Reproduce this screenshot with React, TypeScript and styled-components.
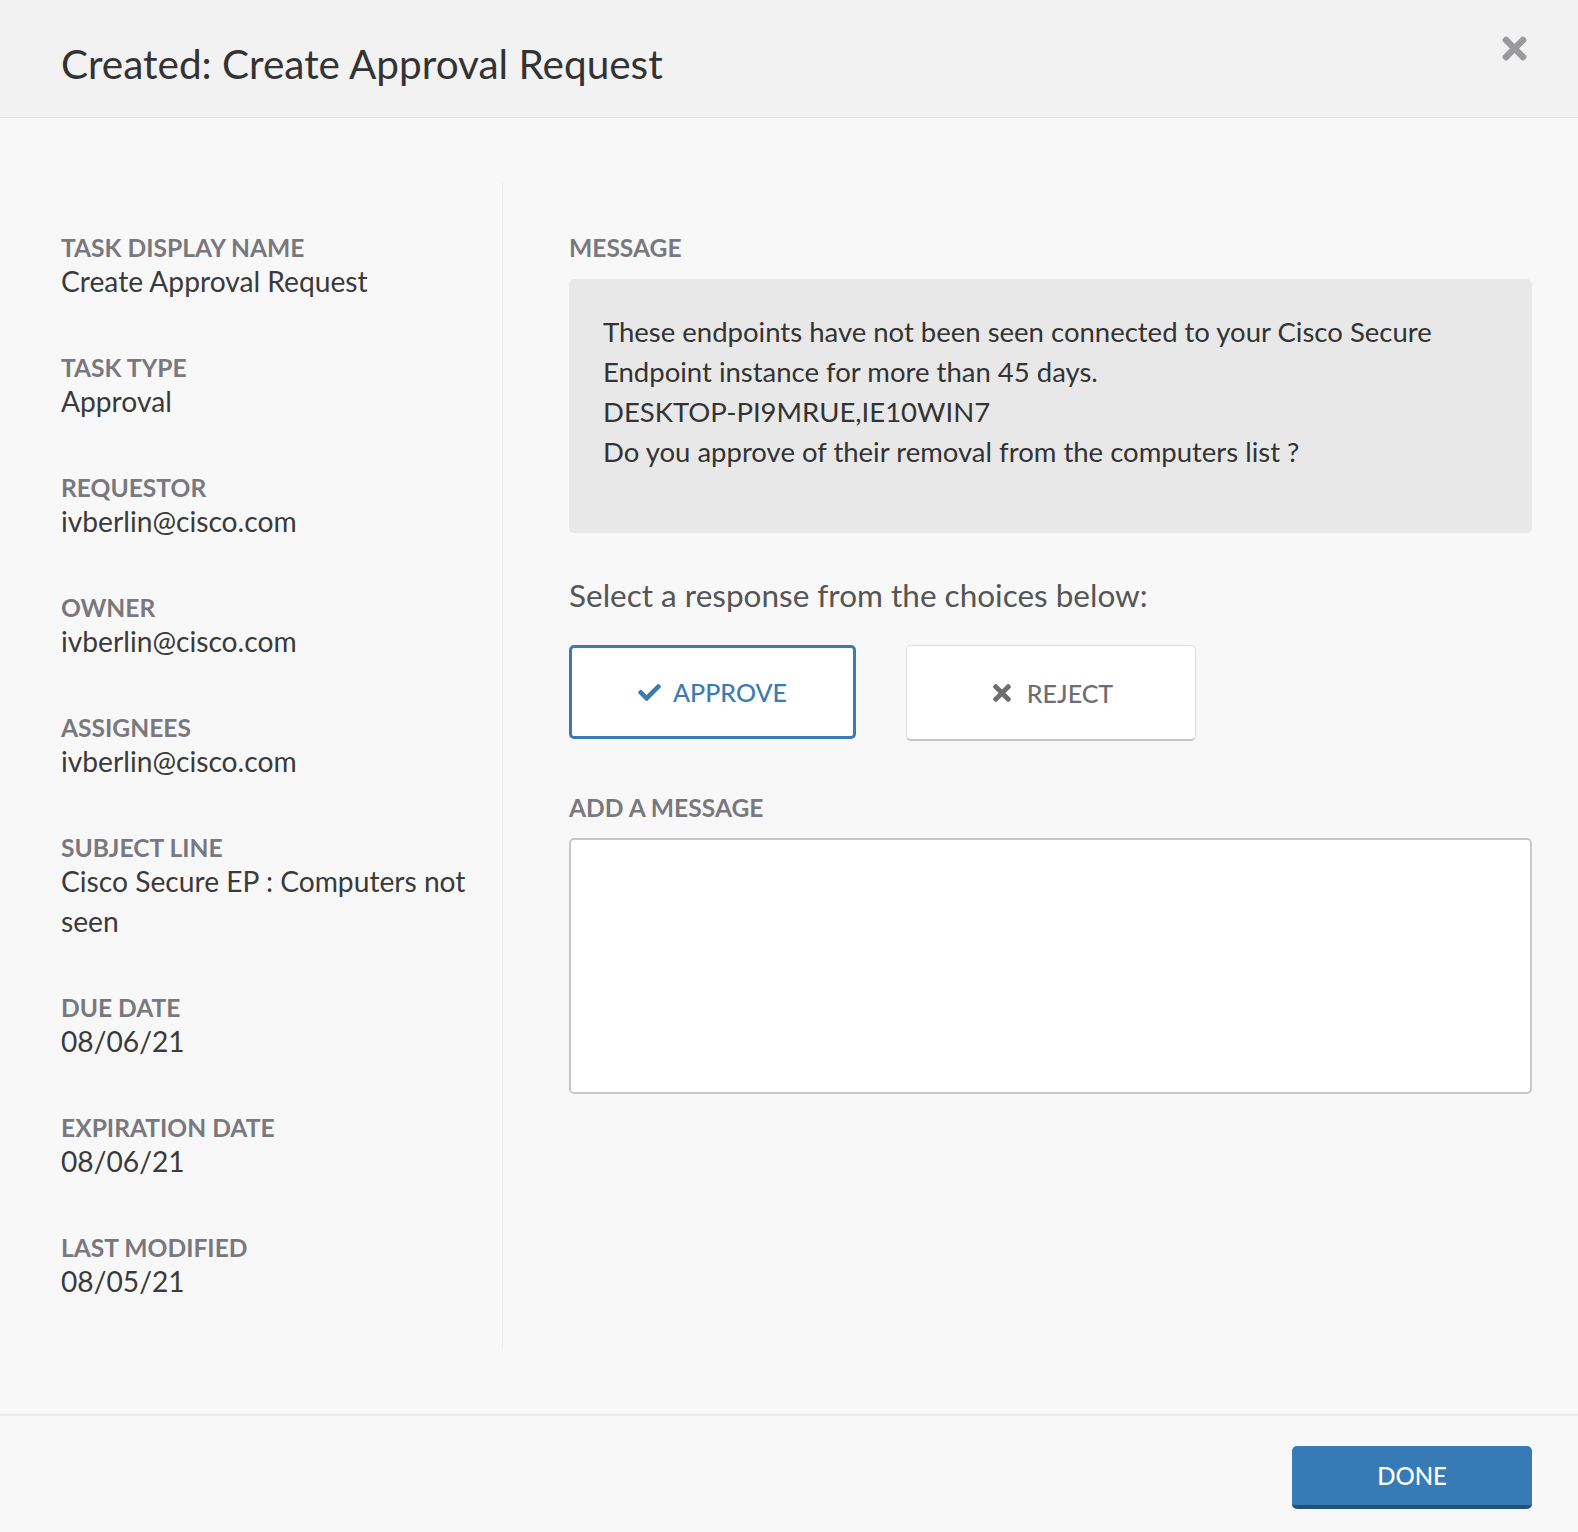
import React from "react";
import styled, { createGlobalStyle } from "styled-components";
import { FaCheck, FaTimes } from "react-icons/fa";

const GlobalStyle = createGlobalStyle`
  html, body {
    margin: 0;
    padding: 0;
    background-color: #f8f8f8;
    font-family: Lato, "Open Sans", "Liberation Sans", sans-serif;
  }
  * {
    box-sizing: border-box;
  }
`;

const Dialog = styled.div`
  display: flex;
  flex-direction: column;
  width: 1578px;
  height: 1532px;
  background-color: #f8f8f8;
`;

const Header = styled.div`
  flex-shrink: 0;
  display: flex;
  align-items: center;
  justify-content: space-between;
  height: 118px;
  padding: 10px 46px 0 61px;
  background-color: #f2f2f2;
  border-bottom: 1px solid #e6e6e6;
`;

const Title = styled.h1`
  margin: 0;
  font-size: 40.5px;
  font-weight: 400;
  color: #333333;
`;

const CloseButton = styled.button`
  display: flex;
  align-items: center;
  justify-content: center;
  border: none;
  background: transparent;
  padding: 0;
  margin-top: -30px;
  color: #9a9a9e;
  cursor: pointer;
`;

const Body = styled.div`
  flex: 1;
  min-height: 0;
  display: flex;
  padding: 64px 46px 65px 0;
`;

const Sidebar = styled.div`
  width: 503px;
  padding: 53px 0 0 61px;
  border-right: 1px solid #ececec;
`;

const Field = styled.div`
  margin-bottom: 54px;
  &:last-child {
    margin-bottom: 0;
  }
`;

const Label = styled.div`
  font-size: 24.6px;
  line-height: 26px;
  font-weight: 700;
  color: #78787e;
  text-transform: uppercase;
`;

const Value = styled.div`
  font-size: 28.2px;
  line-height: 40px;
  color: #3a3a3a;
  max-width: 410px;
`;

const Main = styled.div`
  flex: 1;
  padding: 53px 0 0 66px;
  display: flex;
  flex-direction: column;
`;

const MessageBox = styled.div`
  margin-top: 18px;
  height: 254px;
  padding: 33px 34px;
  background-color: #e8e8e8;
  border-radius: 5px;
  font-size: 27.5px;
  line-height: 40px;
  color: #333333;
`;

const Prompt = styled.div`
  margin-top: 42px;
  font-size: 31.5px;
  line-height: 40px;
  color: #555555;
`;

const Choices = styled.div`
  display: flex;
  align-items: flex-start;
  gap: 50px;
  margin-top: 30px;
`;

const Choice = styled.button<{ $selected?: boolean }>`
  display: flex;
  align-items: center;
  justify-content: center;
  gap: 12px;
  width: ${(p) => (p.$selected ? "287px" : "290px")};
  height: ${(p) => (p.$selected ? "94px" : "96px")};
  background-color: #ffffff;
  border: ${(p) => (p.$selected ? "3px solid #3a7bb6" : "1px solid #dedee0")};
  border-bottom: ${(p) => (p.$selected ? "3px solid #3a7bb6" : "2px solid #c4c4c6")};
  border-radius: 5px;
  font-family: inherit;
  font-size: 25px;
  font-weight: 500;
  color: ${(p) => (p.$selected ? "#3a7bb6" : "#6e6e72")};
  cursor: pointer;
`;

const MessageLabel = styled(Label)`
  margin-top: 54px;
`;

const MessageInput = styled.textarea`
  margin-top: 17px;
  width: 100%;
  height: 256px;
  resize: none;
  background-color: #ffffff;
  border: 2px solid #c8c8cc;
  border-radius: 5px;
  font-family: inherit;
  font-size: 24px;
  padding: 16px;
  &:focus {
    outline: none;
  }
`;

const Footer = styled.div`
  flex-shrink: 0;
  display: flex;
  justify-content: flex-end;
  align-items: flex-start;
  height: 118px;
  padding: 30px 46px 0 0;
  border-top: 2px solid #ebebeb;
`;

const DoneButton = styled.button`
  width: 240px;
  height: 63px;
  background-color: #377bb6;
  border: none;
  border-bottom: 4px solid #24517a;
  border-radius: 5px;
  color: #ffffff;
  font-family: inherit;
  font-size: 24px;
  font-weight: 500;
  cursor: pointer;
`;

const details = [
  { label: "Task Display Name", value: "Create Approval Request" },
  { label: "Task Type", value: "Approval" },
  { label: "Requestor", value: "ivberlin@cisco.com" },
  { label: "Owner", value: "ivberlin@cisco.com" },
  { label: "Assignees", value: "ivberlin@cisco.com" },
  { label: "Subject Line", value: "Cisco Secure EP : Computers not seen" },
  { label: "Due Date", value: "08/06/21" },
  { label: "Expiration Date", value: "08/06/21" },
  { label: "Last Modified", value: "08/05/21" },
];

export default function App() {
  return (
    <Dialog>
      <GlobalStyle />
      <Header>
        <Title>Created: Create Approval Request</Title>
        <CloseButton>
          <FaTimes size={35} />
        </CloseButton>
      </Header>
      <Body>
        <Sidebar>
          {details.map((d) => (
            <Field key={d.label}>
              <Label>{d.label}</Label>
              <Value>{d.value}</Value>
            </Field>
          ))}
        </Sidebar>
        <Main>
          <Label>Message</Label>
          <MessageBox>
            These endpoints have not been seen connected to your Cisco Secure
            Endpoint instance for more than 45 days.
            <br />
            DESKTOP-PI9MRUE,IE10WIN7
            <br />
            Do you approve of their removal from the computers list ?
          </MessageBox>
          <Prompt>Select a response from the choices below:</Prompt>
          <Choices>
            <Choice $selected>
              <FaCheck size={23} />
              APPROVE
            </Choice>
            <Choice>
              <FaTimes size={26} />
              REJECT
            </Choice>
          </Choices>
          <MessageLabel>Add a Message</MessageLabel>
          <MessageInput />
        </Main>
      </Body>
      <Footer>
        <DoneButton>DONE</DoneButton>
      </Footer>
    </Dialog>
  );
}
